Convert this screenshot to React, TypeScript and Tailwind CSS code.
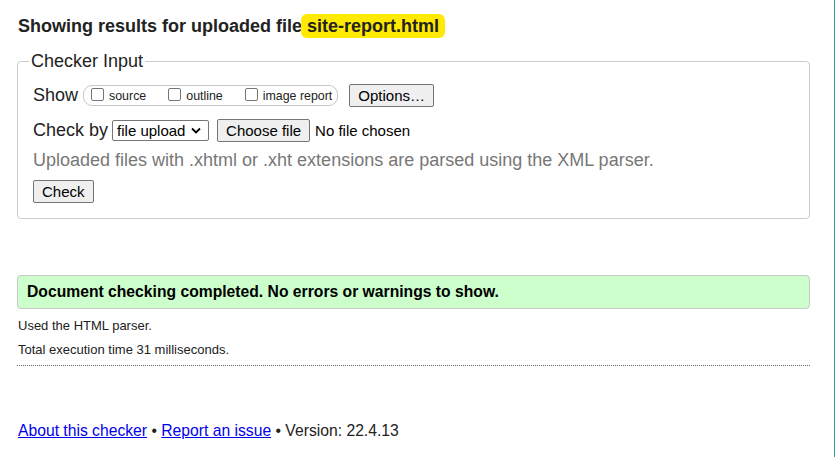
import React from "react";

function Checkbox({ label }: { label: string }) {
  return (
    <label className="flex items-end gap-[5px]">
      <span className="mb-[3px] inline-block h-[13px] w-[13px] rounded-[2px] border border-[#767676] bg-white" />
      <span className="text-[12.4px] leading-[15px]">{label}</span>
    </label>
  );
}

function NativeButton({ children }: { children: React.ReactNode }) {
  return (
    <button
      type="button"
      className="flex h-[23px] items-center rounded-[2px] border border-[#767676] bg-[#efefef] px-[8px] text-[15px] leading-[17px] text-black"
    >
      {children}
    </button>
  );
}

export default function App() {
  return (
    <div className="h-[457px] w-full overflow-hidden border-r border-[#3a9fb0] bg-white font-['Liberation_Sans',Arial,sans-serif] text-[#222]">
      <div className="ml-[17px] w-[793px]">
        {/* Heading */}
        <h2 className="mt-[14px] pl-[1px] text-[18px] font-bold leading-[25px]">
          Showing results for uploaded file{" "}
          <span className="-ml-[6px] rounded-[6px] bg-[#ffea00] py-[2px] pl-[6px] pr-[6px]">
            site-report.html
          </span>
        </h2>

        {/* Checker input */}
        <fieldset className="mt-[12px] rounded-[4px] border border-[#cccccc] pb-[15px] pl-[15px]">
          <legend className="-ml-[4px] px-[2px] text-[18px] leading-[21px]">Checker Input</legend>

          <div className="mt-[12px] flex h-[23px] items-center">
            <span className="text-[18px] leading-[21px]">Show</span>
            <div className="ml-[5px] flex h-[21px] items-center gap-[22px] rounded-[9px] border border-[#c8c8c8] pl-[7px] pr-[5px]">
              <Checkbox label="source" />
              <Checkbox label="outline" />
              <Checkbox label="image report" />
            </div>
            <div className="ml-[11px]">
              <NativeButton>Options…</NativeButton>
            </div>
          </div>

          <div className="mt-[12px] flex h-[23px] items-center">
            <span className="text-[18px] leading-[21px]">Check by</span>
            <div className="ml-[4px] flex h-[21px] w-[97px] items-center rounded-[2px] border border-[#767676] bg-white pl-[4px] pr-[7px] text-[15px] leading-[17px] text-black">
              <span className="flex-1">file upload</span>
              <svg width="10" height="7" viewBox="0 0 10 7" fill="none">
                <path d="M1 1.5 L5 5.5 L9 1.5" stroke="#000" strokeWidth="1.8" />
              </svg>
            </div>
            <div className="ml-[8px]">
              <NativeButton>Choose file</NativeButton>
            </div>
            <span className="ml-[5px] text-[15px] leading-[17px] text-black">No file chosen</span>
          </div>

          <p className="mt-[8px] text-[18px] leading-[21px] text-[#777]">
            Uploaded files with .xhtml or .xht extensions are parsed using the XML parser.
          </p>

          <div className="mt-[9px] flex">
            <NativeButton>Check</NativeButton>
          </div>
        </fieldset>

        {/* Result */}
        <div className="mt-[56px] flex h-[34px] items-center rounded-[4px] border border-[#c8c8c8] bg-[#ccffcc] pl-[9px]">
          <p className="text-[15.7px] font-bold leading-[18px] text-black">
            Document checking completed. No errors or warnings to show.
          </p>
        </div>

        <p className="mt-[9px] pl-[1px] text-[13px] leading-[15px]">Used the HTML parser.</p>
        <p className="mt-[9px] pl-[1px] text-[13px] leading-[15px]">Total execution time 31 milliseconds.</p>

        <div className="mt-[8px] border-t border-dotted border-[#666]" />

        {/* Footer */}
        <p className="mt-[56px] pl-[1px] text-[15.7px] leading-[18px]">
          <a href="#" className="text-[#0000ee] underline">About this checker</a> •{" "}
          <a href="#" className="text-[#0000ee] underline">Report an issue</a> • Version: 22.4.13
        </p>
      </div>
    </div>
  );
}
